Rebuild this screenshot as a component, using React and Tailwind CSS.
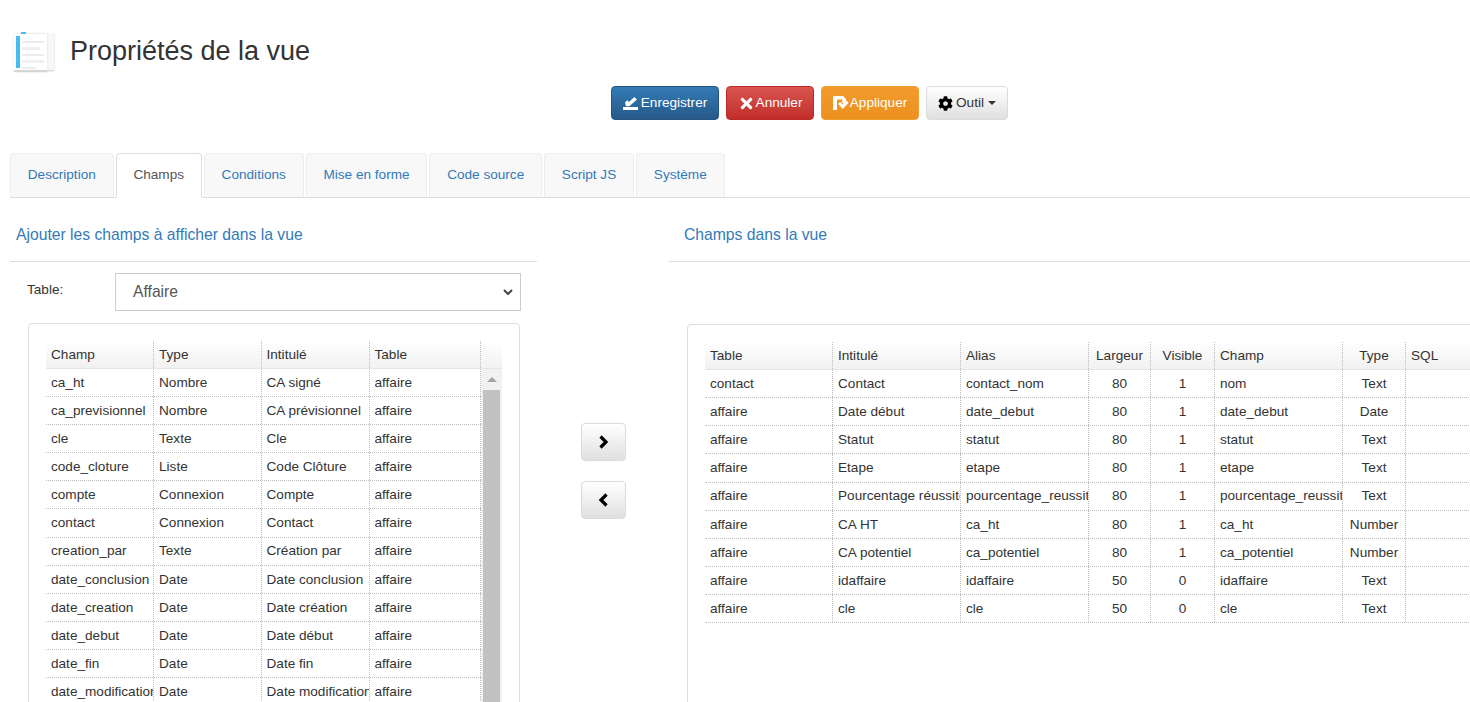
import { FaTimes, FaCog } from 'react-icons/fa'

const TABS = ['Description', 'Champs', 'Conditions', 'Mise en forme', 'Code source', 'Script JS', 'Système']

const LEFT_ROWS = [
  ['ca_ht', 'Nombre', 'CA signé'],
  ['ca_previsionnel', 'Nombre', 'CA prévisionnel'],
  ['cle', 'Texte', 'Cle'],
  ['code_cloture', 'Liste', 'Code Clôture'],
  ['compte', 'Connexion', 'Compte'],
  ['contact', 'Connexion', 'Contact'],
  ['creation_par', 'Texte', 'Création par'],
  ['date_conclusion', 'Date', 'Date conclusion'],
  ['date_creation', 'Date', 'Date création'],
  ['date_debut', 'Date', 'Date début'],
  ['date_fin', 'Date', 'Date fin'],
  ['date_modification', 'Date', 'Date modification'],
]

const RIGHT_ROWS = [
  ['contact', 'Contact', 'contact_nom', '80', '1', 'nom', 'Text'],
  ['affaire', 'Date début', 'date_debut', '80', '1', 'date_debut', 'Date'],
  ['affaire', 'Statut', 'statut', '80', '1', 'statut', 'Text'],
  ['affaire', 'Etape', 'etape', '80', '1', 'etape', 'Text'],
  ['affaire', 'Pourcentage réussite', 'pourcentage_reussite', '80', '1', 'pourcentage_reussite', 'Text'],
  ['affaire', 'CA HT', 'ca_ht', '80', '1', 'ca_ht', 'Number'],
  ['affaire', 'CA potentiel', 'ca_potentiel', '80', '1', 'ca_potentiel', 'Number'],
  ['affaire', 'idaffaire', 'idaffaire', '50', '0', 'idaffaire', 'Text'],
  ['affaire', 'cle', 'cle', '50', '0', 'cle', 'Text'],
]

const RIGHT_ALIGN = ['', '', '', 'text-center', 'text-center', '', 'text-center', '']

function Cell({ children, className = '' }) {
  return (
    <div className={`h-full border-r border-dotted border-[#bbb] px-[5px] pt-[1px] overflow-hidden whitespace-nowrap flex items-center ${className}`}>
      <span className="w-full">{children}</span>
    </div>
  )
}

function SaveIcon() {
  return (
    <svg width="15" height="13" viewBox="0 0 15 13" className="shrink-0">
      <path d="M0 10h15v3H0z" fill="white" />
      <path d="M2 5.5l2.2-2.2L6 5.1 11.2 0 14 2.6 6.4 9.2H3z" fill="white" />
    </svg>
  )
}

function ApplyIcon() {
  return (
    <svg width="16" height="14" viewBox="0 0 16 14" className="shrink-0">
      <path fillRule="evenodd" d="M0 0h10l3 3v2.5l-2.4 2.4L8.6 6 9.5 5V3.5H4V14H0z" fill="white" />
      <path d="M5.2 8l2-2 2.6 2.5 3.8-3.8 2 2-5.8 6.3z" fill="white" />
    </svg>
  )
}

function DocIcon() {
  return (
    <div className="relative w-[40px] h-[41px] shrink-0 blur-[0.4px]">
      <div className="absolute right-0 top-[2px] w-[30px] h-[37px] bg-[#f7f7f7] shadow-[0_1px_2px_#ccc]" />
      <div className="absolute left-0 top-[3px] w-[33px] h-[38px] bg-white border-b-2 border-[#d5d5d5] shadow-[0_0_2px_#ddd] flex flex-col gap-[4px] pl-[8px] pr-[3px] pt-[7px]">
        <div className="h-[3px] bg-[#ececec] w-[22px]" />
        <div className="h-[3px] bg-[#f0f0f0] w-[18px]" />
        <div className="h-[3px] bg-[#ececec] w-[22px]" />
        <div className="h-[3px] bg-[#f0f0f0] w-[22px]" />
        <div className="h-[3px] bg-[#ececec] w-[14px]" />
      </div>
      <div className="absolute left-[2px] top-[5px] w-[4px] h-[32px] bg-[#45bdf2]" />
      <div className="absolute left-[7px] top-[1px] w-[5px] h-[2px] bg-[#45bdf2]" />
    </div>
  )
}

function ArrowButton({ children }) {
  return (
    <button className="w-[45px] h-[38px] rounded border border-[#dbdbdb] bg-gradient-to-b from-white to-[#e0e0e0] flex items-center justify-center">
      {children}
    </button>
  )
}

export default function App() {
  return (
    <div className="h-[702px] w-[1470px] overflow-hidden bg-white text-[13.6px] text-[#333] font-['Liberation_Sans',Arial,sans-serif]">
      {/* Title */}
      <div className="flex items-center pl-[14px] pt-[30px] h-[86px] pb-[14px]">
        <DocIcon />
        <h1 className="ml-[16px] text-[27px] leading-[38px] text-[#333]">Propriétés de la vue</h1>
      </div>

      {/* Toolbar */}
      <div className="flex h-[34px] pl-[611px] gap-[7px]">
        <button className="w-[108px] flex items-center justify-center gap-[3px] rounded border border-[#245580] bg-gradient-to-b from-[#337ab7] to-[#265a88] text-white">
          <SaveIcon />Enregistrer
        </button>
        <button className="w-[88px] flex items-center justify-center gap-[1px] rounded border border-[#b92c28] bg-gradient-to-b from-[#d9534f] to-[#c12e2a] text-white">
          <FaTimes className="text-[17px]" />Annuler
        </button>
        <button className="w-[98px] flex items-center justify-center gap-[1px] rounded border border-[#ee9f30] bg-gradient-to-b from-[#f29b2c] to-[#ec9020] text-white">
          <ApplyIcon />Appliquer
        </button>
        <button className="w-[82px] flex items-center justify-center gap-[3px] rounded border border-[#dbdbdb] bg-gradient-to-b from-white to-[#e0e0e0] text-[#333]">
          <FaCog className="text-black text-[15px]" />Outil
          <span className="ml-[1px] w-0 h-0 border-x-4 border-x-transparent border-t-4 border-t-[#333]" />
        </button>
      </div>

      {/* Tabs */}
      <div className="mt-[33px] mx-[10px] w-[1460px] h-[45px] flex gap-[2px] border-b border-[#ddd]">
        {TABS.map((tab) => (
          <div
            key={tab}
            className={
              tab === 'Champs'
                ? 'h-[45px] px-[16.8px] flex items-center rounded-t border border-[#ddd] border-b-white bg-white text-[#555]'
                : 'h-[44px] px-[16.8px] flex items-center rounded-t border border-b-0 border-[#eee] bg-[#f8f8f8] text-[#337ab7]'
            }
          >
            {tab}
          </div>
        ))}
      </div>

      <div className="flex items-start pl-[10px]">
        {/* Left column */}
        <div className="w-[527px] shrink-0">
          <h3 className="h-[64px] pl-[6px] pt-[25px] text-[15.7px] leading-[23px] text-[#337ab7] border-b border-[#ddd]">
            Ajouter les champs à afficher dans la vue
          </h3>
          <div className="flex items-start pl-[17px] pt-[11px]">
            <label className="w-[88px] leading-[34px]">Table:</label>
            <div className="w-[406px] h-[38px] border border-[#ccc] flex items-center justify-between pl-[17px] pr-[7px] text-[15.7px] text-[#555]">
              Affaire
              <svg width="10" height="6" viewBox="0 0 10 6"><path d="M1 1l4 4 4-4" fill="none" stroke="#444" strokeWidth="2" /></svg>
            </div>
          </div>
          <div className="ml-[18px] mt-[12px] w-[492px] h-[400px] rounded-t border border-[#ddd] pt-[17px] pl-[17px]">
            <div className="w-[456px]">
              <div className="grid grid-cols-[108px_107.5px_108px_111.5px_21px] h-[28px] border-b border-[#e5e5e5] bg-gradient-to-b from-white to-[#f1f1f1]">
                {['Champ', 'Type', 'Intitulé', 'Table', ''].map((h, i) => (
                  <Cell key={i} className={i === 4 ? 'border-r-0' : ''}>{h}</Cell>
                ))}
              </div>
              <div className="flex">
                <div className="w-[435px] shrink-0">
                  {LEFT_ROWS.map((row) => (
                    <div key={row[0]} className="grid grid-cols-[108px_107.5px_108px_111.5px] h-[28.1px] border-b border-dotted border-[#bbb]">
                      <Cell>{row[0]}</Cell>
                      <Cell>{row[1]}</Cell>
                      <Cell>{row[2]}</Cell>
                      <Cell>affaire</Cell>
                    </div>
                  ))}
                </div>
                {/* Scrollbar */}
                <div className="w-[21px] h-[333px] bg-[#f1f1f1] px-[2px] flex flex-col items-center">
                  <div className="h-[21px] w-full flex items-center justify-center">
                    <span className="w-0 h-0 border-x-[5px] border-x-transparent border-b-[5px] border-b-[#a3a3a3]" />
                  </div>
                  <div className="w-full flex-1 bg-[#c1c1c1]" />
                </div>
              </div>
            </div>
          </div>
        </div>

        {/* Move buttons */}
        <div className="w-[132px] shrink-0 pl-[44px] pt-[225px] flex flex-col gap-[20px]">
          <ArrowButton>
            <svg width="11" height="14" viewBox="0 0 11 14"><path d="M2.5 1.5L8 7l-5.500 5.500" fill="none" stroke="black" strokeWidth="3.2" /></svg>
          </ArrowButton>
          <ArrowButton>
            <svg width="11" height="14" viewBox="0 0 11 14"><path d="M8.500 1.500L3 7l5.500 5.500" fill="none" stroke="black" strokeWidth="3.2" /></svg>
          </ArrowButton>
        </div>

        {/* Right column */}
        <div className="w-[801px] shrink-0 overflow-hidden">
          <h3 className="h-[64px] pl-[15px] pt-[25px] text-[15.7px] leading-[23px] text-[#337ab7] border-b border-[#ddd]">
            Champs dans la vue
          </h3>
          <div className="ml-[18px] mt-[62px] w-[800px] h-[400px] rounded-tl border border-[#ddd] pt-[17px] pl-[17px]">
            <div className="w-[800px]">
              <div className="grid grid-cols-[128px_128px_128px_62px_64px_128px_63px_100px] h-[28px] border-b border-[#e5e5e5] bg-gradient-to-b from-white to-[#f1f1f1]">
                {['Table', 'Intitulé', 'Alias', 'Largeur', 'Visible', 'Champ', 'Type', 'SQL'].map((h, i) => (
                  <Cell key={h} className={`${RIGHT_ALIGN[i]} ${i === 7 ? 'border-r-0' : ''}`}>{h}</Cell>
                ))}
              </div>
              {RIGHT_ROWS.map((row) => (
                <div key={row[0] + row[2]} className="grid grid-cols-[128px_128px_128px_62px_64px_128px_63px_100px] h-[28.15px] border-b border-dotted border-[#bbb]">
                  {[...row, ''].map((value, i) => (
                    <Cell key={i} className={`${RIGHT_ALIGN[i]} ${i === 7 ? 'border-r-0' : ''}`}>{value}</Cell>
                  ))}
                </div>
              ))}
            </div>
          </div>
        </div>
      </div>
    </div>
  )
}
